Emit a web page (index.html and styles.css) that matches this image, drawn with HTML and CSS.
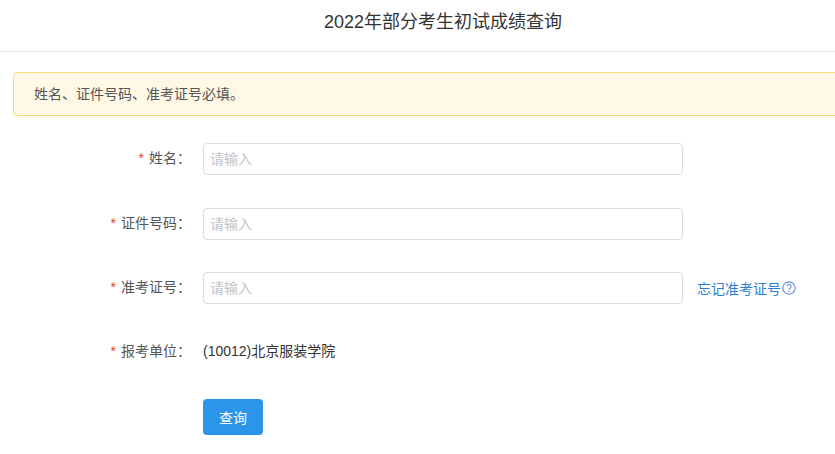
FILE: index.html
```html
<!DOCTYPE html>
<html lang="zh-CN">
<head>
    <meta charset="UTF-8">
    <meta name="viewport" content="width=device-width, initial-scale=1.0">
    <title>2022年部分考生初试成绩查询</title>
    <link rel="stylesheet" href="styles.css">
</head>
<body>
    <div class="page">
        <div class="header">2022年部分考生初试成绩查询</div>
        <div class="alert">姓名、证件号码、准考证号必填。</div>
        <form class="form">
            <div class="form-row">
                <label class="form-label"><span class="req">*</span>姓名：</label>
                <input class="form-input" type="text" placeholder="请输入">
            </div>
            <div class="form-row">
                <label class="form-label"><span class="req">*</span>证件号码：</label>
                <input class="form-input" type="text" placeholder="请输入">
            </div>
            <div class="form-row">
                <label class="form-label"><span class="req">*</span>准考证号：</label>
                <input class="form-input" type="text" placeholder="请输入">
                <a class="forgot" href="#">忘记准考证号<svg class="help-icon" width="14" height="14" viewBox="0 0 14 14" fill="none"><circle cx="7" cy="7" r="6.2" stroke="#6f8fe0" stroke-width="1.2"/><path d="M5 5.5a2 2 0 1 1 3 1.7c-.7.4-1 .8-1 1.5" stroke="#6f8fe0" stroke-width="1.2"/><circle cx="7" cy="10.5" r=".8" fill="#6f8fe0"/></svg></a>
            </div>
            <div class="form-row form-row-static">
                <label class="form-label"><span class="req">*</span>报考单位：</label>
                <span class="form-value">(10012)北京服装学院</span>
            </div>
            <div class="form-actions">
                <button class="btn-primary" type="button">查询</button>
            </div>
        </form>
    </div>
</body>
</html>
```
FILE: styles.css
```css
html, body {
    margin: 0;
    overflow: hidden;
    height: 100%;
}
body {
    font-family: "Liberation Sans", "Noto Sans CJK SC", sans-serif;
    font-size: 14px;
    color: #333;
    background-color: #fff;
}
.page {
    width: 886px;
}
.header {
    height: 51px;
    line-height: 44px;
    text-align: center;
    font-size: 18px;
    border-bottom: 1px solid #e8e8e8;
}
.alert {
    margin: 20px 0 0 13px;
    height: 42px;
    line-height: 42px;
    padding-left: 20px;
    background-color: #fff8e6;
    border: 1px solid #ffd77a;
    border-radius: 4px;
    color: #555;
}
.form {
    margin-top: 27px;
}
.form-row {
    display: flex;
    align-items: center;
    height: 32px;
    margin-bottom: 32.5px;
}
.form-row-static {
    margin-top: -2.5px;
}
.form-label {
    width: 191px;
    margin-right: 12px;
    padding-bottom: 4px;
    text-align: right;
    color: #555;
}
.form-row-static .form-label {
    padding-bottom: 0;
}
.req {
    margin-right: 5px;
    color: #e8401c;
}
.form-input {
    width: 480px;
    height: 32px;
    box-sizing: border-box;
    padding: 0 6px;
    border: 1px solid #dcdcdc;
    border-radius: 4px;
    font: inherit;
    outline: none;
}
.form-input::placeholder {
    color: #c0c4cc;
}
.forgot {
    display: flex;
    align-items: center;
    margin-left: 14px;
    color: #2d7fd3;
    text-decoration: none;
}
.help-icon {
    margin-left: 1px;
}
.form-value {
    color: #333;
}
.form-actions {
    padding-left: 203px;
    margin-top: 32.5px;
}
.btn-primary {
    width: 60px;
    height: 36px;
    border: none;
    border-radius: 4px;
    background-color: #2b95ea;
    color: #fff;
    font: inherit;
    cursor: pointer;
}
```
